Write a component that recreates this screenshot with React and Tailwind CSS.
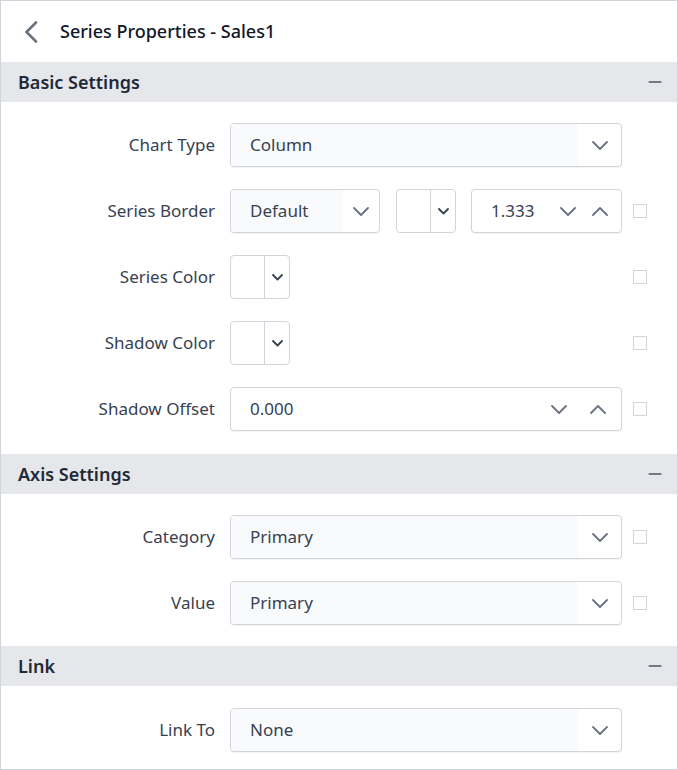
import { Minus } from "lucide-react"

const font = { fontFamily: '"Noto Sans", "Open Sans", sans-serif' }

// Thin chevron used inside the inputs
const Chevron = ({ up = false, className = "" }) => (
  <svg width="16" height="9" viewBox="0 0 16 9" fill="none" className={className}>
    <path
      d={up ? "M1 8 L8 1 L15 8" : "M1 1 L8 8 L15 1"}
      stroke="currentColor"
      strokeWidth="1.8"
      strokeLinecap="round"
      strokeLinejoin="round"
    />
  </svg>
)

const SmallChevron = () => (
  <svg width="11" height="7" viewBox="0 0 11 7" fill="none" className="text-[#374151]">
    <path d="M1 1 L5.5 5.5 L10 1" stroke="currentColor" strokeWidth="1.8" strokeLinecap="round" strokeLinejoin="round" />
  </svg>
)

const BackChevron = () => (
  <svg width="14" height="22" viewBox="0 0 14 22" fill="none" className="text-[#6b7280]">
    <path d="M12 1.5 L2.5 11 L12 20.5" stroke="currentColor" strokeWidth="2.6" strokeLinecap="round" strokeLinejoin="round" />
  </svg>
)

// Section header bar with collapse glyph
const SectionHeader = ({ title }) => (
  <div className="h-[40px] bg-[#e5e7eb] flex items-center justify-between pl-[17px] pr-[12px]">
    <span className="text-[18px] font-semibold text-[#1f2937]">{title}</span>
    <Minus size={20} strokeWidth={1.7} className="text-[#4b5563]" />
  </div>
)

const Check = ({ show = true }) => (
  <div className="w-[14px] h-[14px] shrink-0">
    {show && <div className="w-[14px] h-[14px] border border-[#d1d5db] bg-white" />}
  </div>
)

const Row = ({ label, check = true, children }) => (
  <div className="flex items-center h-[44px]">
    <div className="w-[214px] text-right text-[17px] text-[#374151] shrink-0">{label}</div>
    <div className="w-[392px] ml-[15px] flex items-center shrink-0">{children}</div>
    <div className="ml-[11px]">
      <Check show={check} />
    </div>
  </div>
)

const Dropdown = ({ value, width = "w-full", arrow = "w-[43px]" }) => (
  <div className={`${width} h-[44px] rounded-[4px] border border-[#d1d5db] shadow-[0_1px_1px_rgba(0,0,0,0.05)] flex overflow-hidden bg-white`}>
    <div className="flex-1 bg-[#f9fafb] pl-[19px] flex items-center text-[17px] text-[#374151]">{value}</div>
    <div className={`${arrow} flex items-center justify-center`}>
      <Chevron className="text-[#6b7280]" />
    </div>
  </div>
)

const ColorPicker = () => (
  <div className="w-[60px] h-[44px] rounded-[4px] border border-[#d1d5db] flex bg-white overflow-hidden">
    <div className="w-[34px] border-r border-[#d1d5db]" />
    <div className="flex-1 flex items-center justify-center">
      <SmallChevron />
    </div>
  </div>
)

const Numeric = ({ value, width = "w-full", gap = "gap-[16px]", pr = "pr-[12px]" }) => (
  <div className={`${width} h-[44px] rounded-[4px] border border-[#d1d5db] shadow-[0_1px_1px_rgba(0,0,0,0.05)] flex items-center bg-white pl-[19px] ${pr}`}>
    <span className="flex-1 text-[17px] text-[#374151]">{value}</span>
    <div className={`flex items-center ${gap}`}>
      <Chevron className="text-[#6b7280]" />
      <Chevron up className="text-[#6b7280]" />
    </div>
  </div>
)

export default function App() {
  return (
    <div style={font} className="w-[678px] h-[770px] border border-[#d1d5db] bg-white overflow-hidden">
      {/* Title bar */}
      <div className="h-[61px] flex items-center pl-[23px]">
        <BackChevron />
        <span className="ml-[22px] text-[18px] font-medium text-[#111827]">Series Properties - Sales1</span>
      </div>

      <SectionHeader title="Basic Settings" />
      <div className="pt-[21px] pb-[23px] flex flex-col gap-[22px]">
        <Row label="Chart Type" check={false}>
          <Dropdown value="Column" />
        </Row>
        <Row label="Series Border">
          <Dropdown value="Default" width="w-[150px]" arrow="w-[37px]" />
          <div className="ml-[16px]">
            <ColorPicker />
          </div>
          <div className="ml-[15px]">
            <Numeric value="1.333" width="w-[151px]" gap="gap-[16px]" pr="pr-[13px]" />
          </div>
        </Row>
        <Row label="Series Color">
          <ColorPicker />
        </Row>
        <Row label="Shadow Color">
          <ColorPicker />
        </Row>
        <Row label="Shadow Offset">
          <Numeric value="0.000" gap="gap-[23px]" pr="pr-[15px]" />
        </Row>
      </div>

      <SectionHeader title="Axis Settings" />
      <div className="pt-[21px] pb-[21px] flex flex-col gap-[22px]">
        <Row label="Category">
          <Dropdown value="Primary" />
        </Row>
        <Row label="Value">
          <Dropdown value="Primary" />
        </Row>
      </div>

      <SectionHeader title="Link" />
      <div className="pt-[22px] flex flex-col">
        <Row label="Link To" check={false}>
          <Dropdown value="None" />
        </Row>
      </div>
    </div>
  )
}
